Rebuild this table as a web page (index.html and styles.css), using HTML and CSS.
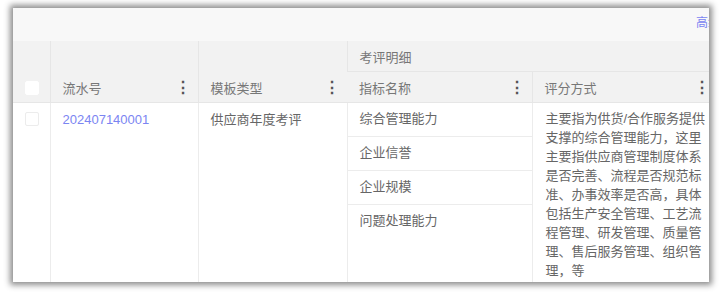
FILE: index.html
```html
<!DOCTYPE html>
<html lang="zh-CN">
<head>
<meta charset="utf-8">
<link rel="stylesheet" href="styles.css">
</head>
<body>
<div class="card">
  <div class="toolbar"><a class="adv">高级搜索</a></div>
  <div class="table-wrap">
    <table class="grid">
      <colgroup>
        <col class="c-check"><col class="c-no"><col class="c-tpl"><col class="c-name"><col class="c-way">
      </colgroup>
      <thead>
        <tr class="h1">
          <th rowspan="2" class="th-check"><span class="cb cb-head"></span></th>
          <th rowspan="2"><div class="hd"><span>流水号</span><span class="more">⋮</span></div></th>
          <th rowspan="2"><div class="hd"><span>模板类型</span><span class="more">⋮</span></div></th>
          <th colspan="2" class="group"><div class="hd"><span>考评明细</span></div></th>
        </tr>
        <tr class="h2">
          <th><div class="hd"><span>指标名称</span><span class="more">⋮</span></div></th>
          <th><div class="hd"><span>评分方式</span><span class="more">⋮</span></div></th>
        </tr>
      </thead>
      <tbody>
        <tr>
          <td class="td-check"><span class="cb"></span></td>
          <td><a class="link">202407140001</a></td>
          <td>供应商年度考评</td>
          <td class="sub">
            <div class="subrow">综合管理能力</div>
            <div class="subrow">企业信誉</div>
            <div class="subrow">企业规模</div>
            <div class="subrow last">问题处理能力</div>
          </td>
          <td class="desc"><div class="desc-text">主要指为供货/合作服务提供支撑的综合管理能力，这里主要指供应商管理制度体系是否完善、流程是否规范标准、办事效率是否高，具体包括生产安全管理、工艺流程管理、研发管理、质量管理、售后服务管理、组织管理，等</div></td>
        </tr>
      </tbody>
    </table>
  </div>
</div>
</body>
</html>
```
FILE: styles.css
```css
html, body {
  margin: 0;
  padding: 0;
  background: #ffffff;
}
body {
  padding: 8px 14px 10px 13px;
  font-family: "Liberation Sans", "Noto Sans CJK SC", sans-serif;
  font-size: 13px;
  color: #666666;
}
.card {
  width: 696px;
  height: 274px;
  background: #ffffff;
  box-shadow: 0 0 6px 3px rgba(0, 0, 0, 0.45);
  overflow: hidden;
  display: flex;
  flex-direction: column;
}
.toolbar {
  height: 33px;
  flex: none;
  background: #f8f8f8;
  position: relative;
  overflow: hidden;
  white-space: nowrap;
}
.adv {
  position: absolute;
  left: 683px;
  top: 8px;
  color: #7b85f2;
  font-size: 12px;
  line-height: 14px;
}
.table-wrap {
  flex: 1;
  overflow: hidden;
}
.grid {
  border-collapse: collapse;
  table-layout: fixed;
  width: 704px;
}
.c-check { width: 37px; }
.c-no { width: 148px; }
.c-tpl { width: 149px; }
.c-name { width: 185px; }
.c-way { width: 185px; }
th {
  background: #f2f2f2;
  font-weight: normal;
  text-align: left;
  color: #777777;
  padding: 0;
  border-left: 1px solid #e6e6e6;
  border-bottom: 1px solid #e6e6e6;
}
th:first-child { border-left: none; }
.h1 th { height: 30px; }
.h2 th { height: 30px; }
.h1 th[rowspan] { vertical-align: bottom; }
.hd {
  display: flex;
  align-items: center;
  justify-content: space-between;
  height: 30px;
  padding: 0 17px 0 12px;
}
.group .hd { padding-left: 12px; }
.h1 .group .hd { height: 29px; }
.more {
  font-size: 16px;
  font-weight: bold;
  color: #555555;
  width: 6px;
  text-align: center;
}
.th-check { vertical-align: bottom; }
.th-check .cb { margin: 0 0 7px 12px; }
.cb {
  display: block;
  width: 14px;
  height: 14px;
  background: #ffffff;
  border: 1px solid #ececec;
  border-radius: 2px;
  box-sizing: border-box;
}
.cb-head { border-color: #ffffff; }
td {
  vertical-align: top;
  padding: 8px 12px 0 12px;
  border-left: 1px solid #ececec;
  line-height: 18px;
  height: 170px;
  color: #666666;
}
td:first-child { border-left: none; }
.td-check { padding: 9px 0 0 12px; }
.link { color: #7b85f2; }
td.sub { padding: 0; }
.subrow {
  height: 34px;
  line-height: 18px;
  padding: 7px 12px 0 12px;
  box-sizing: border-box;
  border-bottom: 1px solid #ececec;
}
.subrow.last { border-bottom: none; }
td.desc { padding: 6px 8px 0 13px; }
.desc-text {
  width: 162px;
  line-height: 19px;
  word-break: break-all;
}
```
